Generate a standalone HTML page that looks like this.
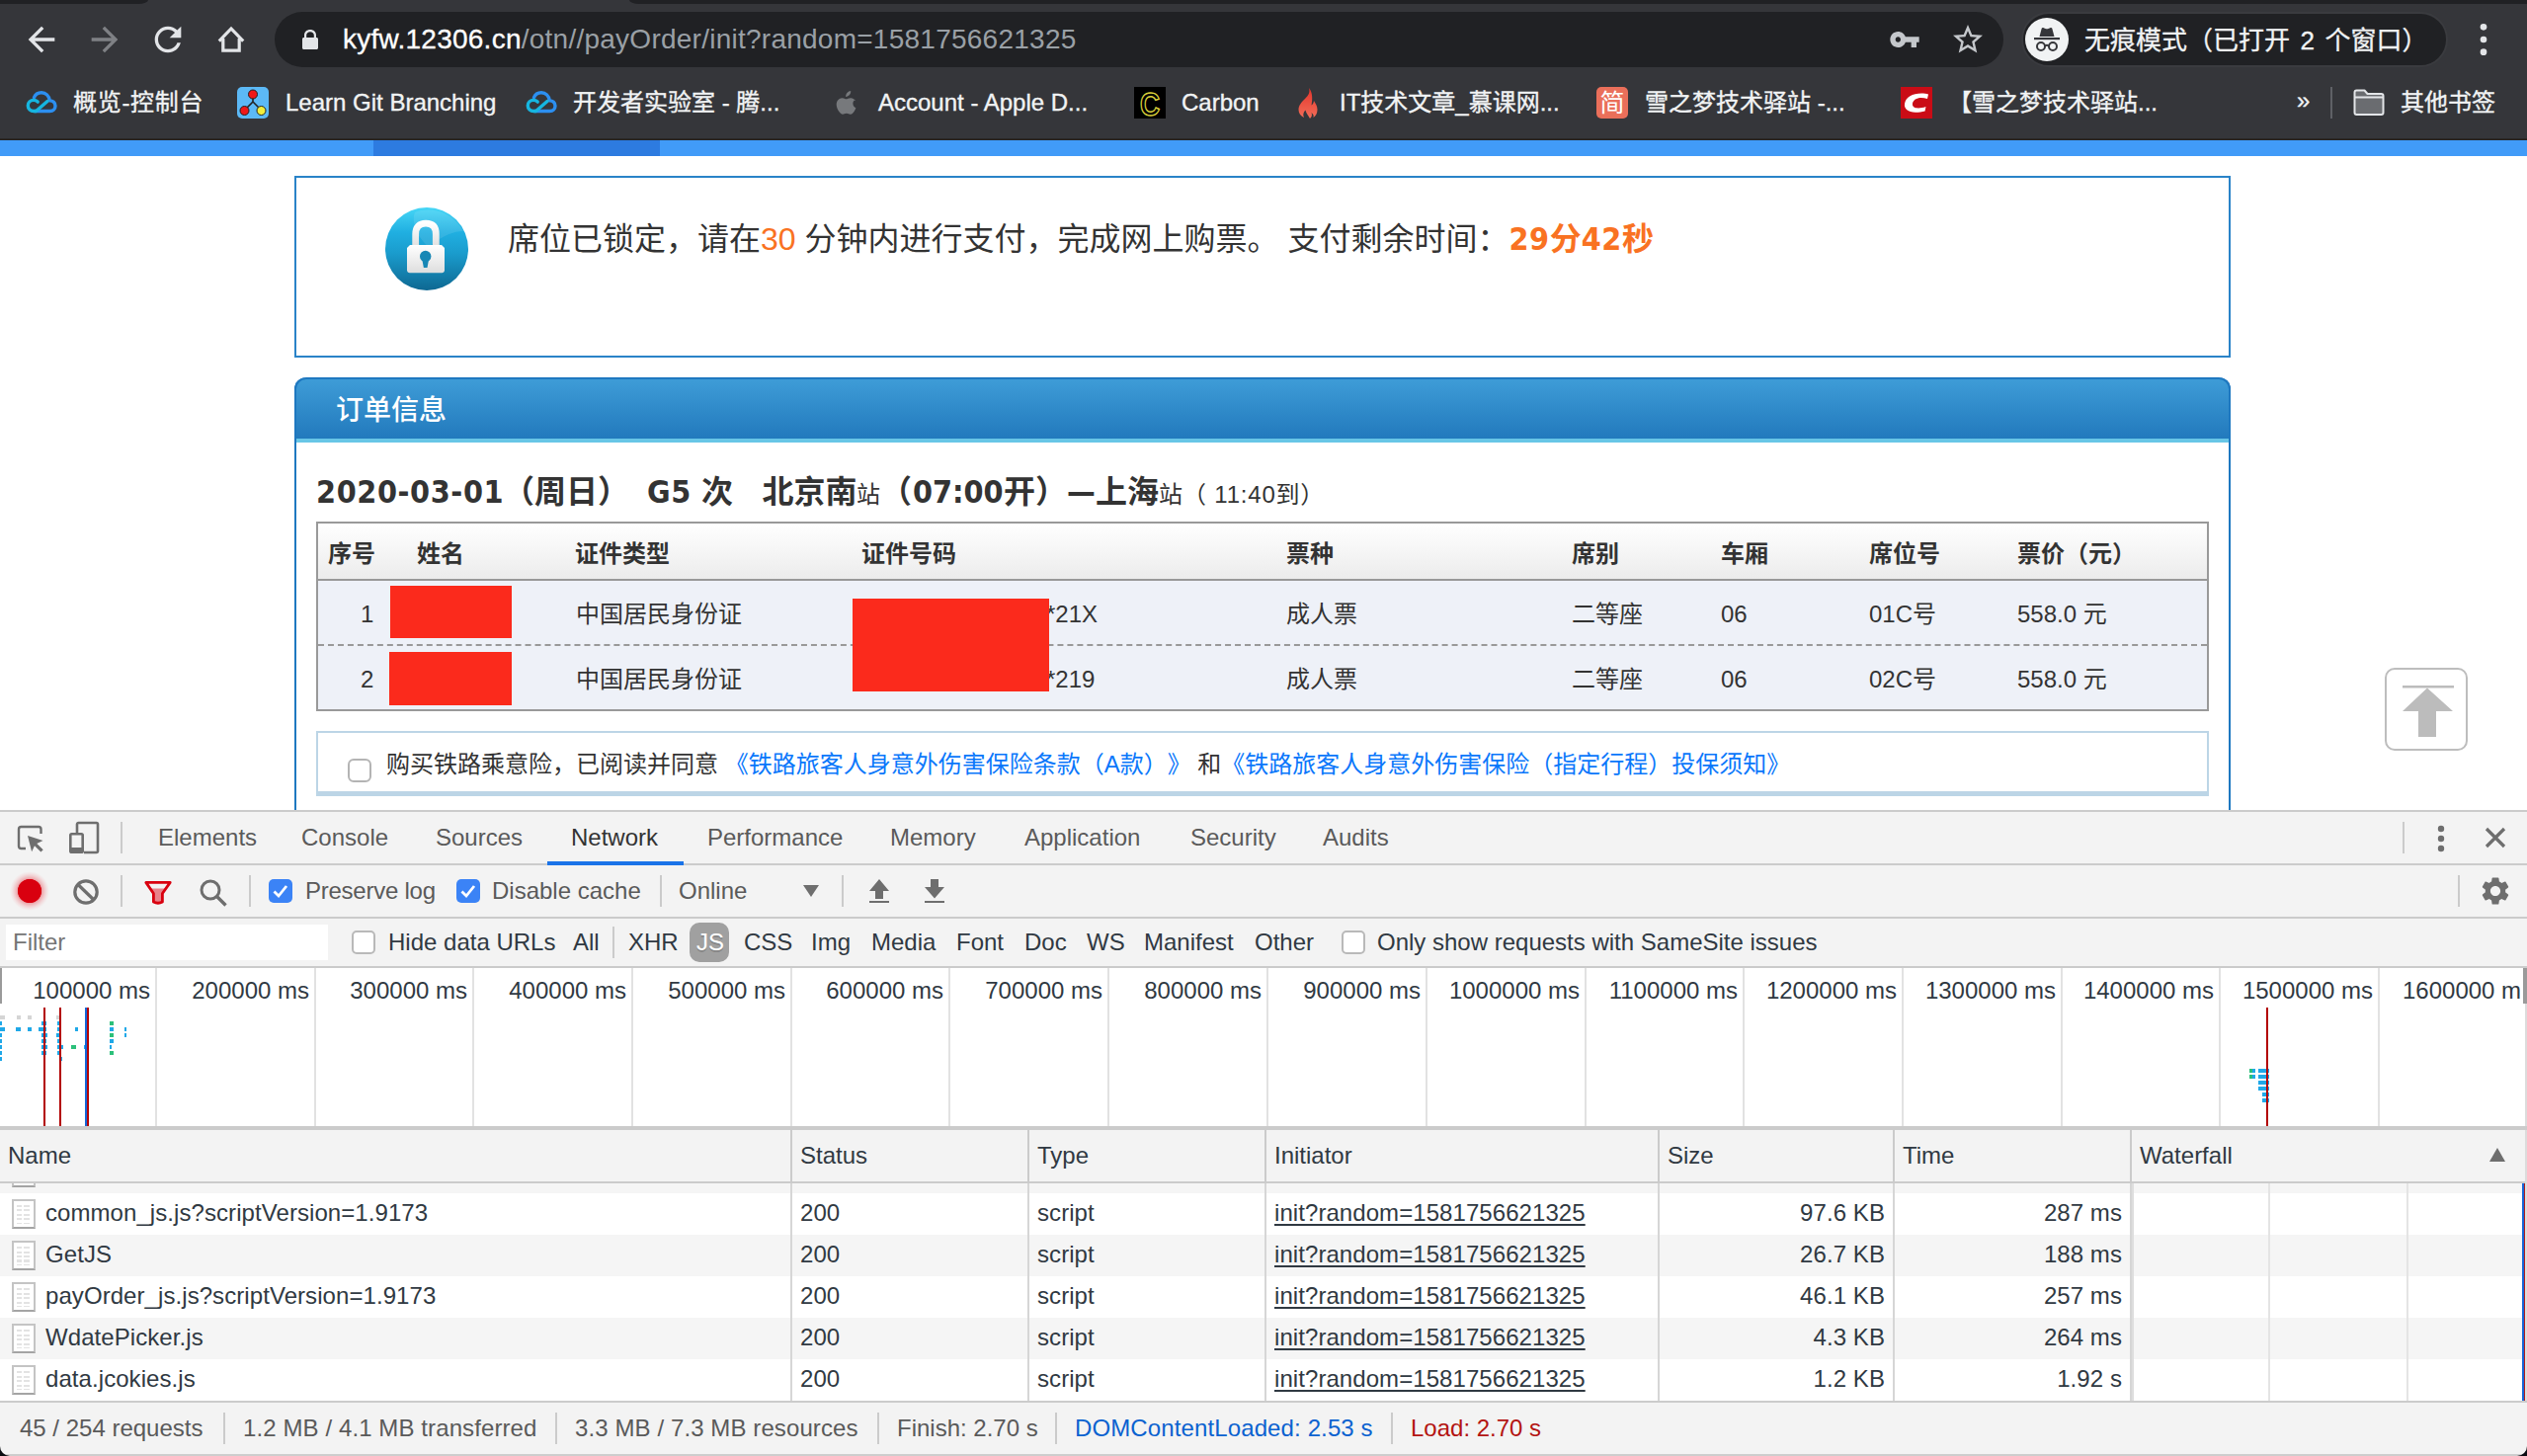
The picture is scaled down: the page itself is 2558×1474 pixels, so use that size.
<!DOCTYPE html>
<html lang="zh-CN">
<head>
<meta charset="utf-8">
<title>12306 payOrder</title>
<style>
*{box-sizing:border-box;margin:0;padding:0}
html,body{width:2558px;height:1474px;overflow:hidden;background:#fff}
body{position:relative;text-spacing-trim:space-all;font-family:"Liberation Sans","Noto Sans CJK SC",sans-serif;color:#333}
.a{position:absolute;white-space:nowrap}
svg{position:absolute;overflow:visible}
/* ---------- browser chrome ---------- */
#chrome{left:0;top:0;width:2558px;height:141px;background:#35363a}
#chrome .strip1{left:0;top:0;width:150px;height:4px;background:#202124;border-bottom-right-radius:10px 4px}
#chrome .strip2{left:637px;top:0;width:1921px;height:4px;background:#202124;border-bottom-left-radius:10px 4px}
#urlpill{left:278px;top:12px;width:1750px;height:56px;border-radius:28px;background:#202124}
#incog{left:2046px;top:12px;width:432px;height:56px;border-radius:28px;background:#202124;border:2px solid #3a3b3f}
.url{left:347px;top:22px;font-size:28px;line-height:36px;color:#9aa0a6;letter-spacing:.25px}
.url b{font-weight:normal;color:#fff;-webkit-text-stroke:.3px #fff}
.bm{top:87px;font-size:24px;line-height:34px;color:#f1f3f4;-webkit-text-stroke:.35px #f1f3f4}
.incogt{left:2110px;top:23px;font-size:26px;line-height:36px;color:#f1f3f4;word-spacing:3.3px;-webkit-text-stroke:.3px #f1f3f4}
#chromeline{left:0;top:140px;width:2558px;height:2px;background:linear-gradient(#2b2b2d,#221f1c)}
#bluebar{left:0;top:142px;width:2558px;height:16px;background:#419bf8}
#bluebar i{position:absolute;left:378px;top:0;width:290px;height:16px;background:#2d7be0}
/* ---------- page ---------- */
#page{left:0;top:158px;width:2558px;height:662px;background:#fff;overflow:hidden}
.pg{font-family:"Liberation Sans","Noto Sans CJK SC",sans-serif;color:#333}
#box1{left:298px;top:20px;width:1960px;height:184px;border:2px solid #2a83c8}
#obox{left:298px;top:224px;width:1960px;height:500px;border:2px solid #1e78c0;border-top:none;border-radius:12px 12px 0 0}
#ohead{left:298px;top:224px;width:1960px;height:66px;border-radius:12px 12px 0 0;background:linear-gradient(#3e9cd7,#2077bb);border:2px solid #1e78c0;border-bottom:none}
#oline{left:300px;top:286px;width:1956px;height:4px;background:#68c6e6}
.bold{font-family:"DejaVu Sans","Noto Sans CJK SC",sans-serif;font-stretch:condensed;font-weight:bold}
.ls{letter-spacing:.6px}
.tl1>span{display:inline-block;white-space:nowrap}
.tl1>span.bold{font-size:32px}
#tbl{left:320px;top:370px;width:1916px;height:192px;border:2px solid #999;background:#eef1f8}
#thead{left:322px;top:372px;width:1912px;height:58px;background:linear-gradient(#ffffff,#ececec);border-bottom:2px solid #999}
.th{top:383px;font-size:24px;line-height:40px;font-weight:bold;color:#333}
.td{font-size:24px;line-height:40px;color:#333}
.r1{top:444px}.r2{top:510px}
#dash{left:322px;top:494px;width:1912px;height:0;border-top:2px dashed #999}
.red{background:#fb2a1c}
#ins{left:320px;top:582px;width:1916px;height:66px;border:2px solid #bcd5e6;border-bottom-width:5px;background:#fff}
#ins .cb{left:30px;top:26px;width:24px;height:24px;border:2px solid #b4b4b4;border-radius:6px;background:#fff}
.lk{color:#0a77fb}
#totop{left:2414px;top:518px;width:84px;height:84px;border:2px solid #bdbdbd;border-radius:10px;background:#fff}
/* ---------- devtools ---------- */
#dt{left:0;top:820px;width:2558px;height:654px;background:#f3f3f3;font-size:24px;color:#303942}
.hl{left:0;width:2558px;height:2px;background:#cbcbcb}
.vs{width:2px;background:#cbcbcb}
.tab{top:11px;line-height:34px;color:#5a5a5a}
.t2{top:65px;line-height:34px;color:#5a5a5a}
.ft{top:117px;line-height:34px;color:#303942}
.cbx{width:24px;height:24px;border-radius:5px}
.cbon{background:#3b83f6}
.cboff{background:#fff;border:2px solid #b9b9b9}
#ov{left:0;top:160px;width:2558px;height:160px;background:#fff}
.tk{top:0;width:2px;height:160px;background:#e2e2e2}
.tl{top:6px;line-height:34px;color:#303942;text-align:right;width:156px}
#hdr{left:0;top:324px;width:2558px;height:52px}
.hd{top:9px;line-height:34px;color:#303942}
.row{left:0;width:2556px;height:42px}
.row.g{background:#f5f5f5}.row.w{background:#fff}
.row .c{letter-spacing:.07px;position:absolute;top:3px;line-height:34px;white-space:nowrap;color:#303942}
.row .u{text-decoration:underline;text-decoration-thickness:2px;text-underline-offset:3px}
.row .rt{text-align:right}
.fi{left:12px;top:6px;width:24px;height:30px;border:2px solid #c4c4c4;border-bottom-color:#a4a4a4;background:#fff}
.fi i{position:absolute;left:3px;top:4px;width:15px;height:19px;background:linear-gradient(90deg,transparent 0 5px,#fff 5px 7px,transparent 7px 13px,#fff 13px 15px),repeating-linear-gradient(#e3e3e3 0 2px,#fff 2px 4.500px)}
#sb{left:0;top:598px;width:2558px;height:56px;background:#f3f3f3;border-top:2px solid #cbcbcb}
#sb .s{top:9px;line-height:34px;color:#5a5a5a}
#sb .v{top:10px;height:32px}
</style>
</head>
<body>
<!-- CHROME -->
<div id="chrome" class="a">
<div class="a strip1"></div><div class="a strip2"></div>
<div id="urlpill" class="a"></div>
<div id="incog" class="a"></div>
<!-- nav icons -->
<svg style="left:22px;top:20px" width="40" height="40" viewBox="0 0 24 24"><path fill="#e3e5e8" d="M20 11H7.83l5.59-5.59L12 4l-8 8 8 8 1.41-1.41L7.83 13H20v-2z"/></svg>
<svg style="left:86px;top:20px" width="40" height="40" viewBox="0 0 24 24"><path fill="#7f8185" d="M12 4l-1.41 1.41L16.17 11H4v2h12.17l-5.58 5.59L12 20l8-8z"/></svg>
<svg style="left:150px;top:20px" width="40" height="40" viewBox="0 0 24 24"><path fill="#e3e5e8" d="M17.65 6.35C16.2 4.9 14.21 4 12 4c-4.42 0-7.99 3.58-7.99 8s3.57 8 7.99 8c3.73 0 6.84-2.55 7.73-6h-2.08c-.82 2.33-3.04 4-5.65 4-3.31 0-6-2.69-6-6s2.69-6 6-6c1.66 0 3.14.69 4.22 1.78L13 11h7V4l-2.35 2.35z"/></svg>
<svg style="left:214px;top:20px" width="40" height="40" viewBox="214 20 40 40"><path d="M221.800 41.600L234 29l12.200 12.600" fill="none" stroke="#e3e5e8" stroke-width="3.200" stroke-linejoin="miter"/><path d="M225.800 39v12.100h16.400V39" fill="none" stroke="#e3e5e8" stroke-width="3.200"/></svg>
<!-- lock -->
<svg style="left:304px;top:28px" width="20" height="24" viewBox="0 0 20 24"><path fill="#e3e5e8" d="M4 10V7.5C4 4.2 6.7 2 10 2s6 2.200 6 5.500V10h.5c.8 0 1.500.7 1.500 1.500v9c0 .8-.7 1.500-1.500 1.500h-13C2.700 22 2 21.300 2 20.500v-9C2 10.700 2.700 10 3.500 10H4zm2.200 0h7.600V7.500c0-2-1.700-3.300-3.800-3.300S6.200 5.500 6.200 7.500V10z"/></svg>
<div class="a url"><b>kyfw.12306.cn</b>/otn//payOrder/init?random=1581756621325</div>
<!-- key + star -->
<svg style="left:1912px;top:24px" width="32" height="32" viewBox="0 0 24 24"><path fill="#c4c7cb" d="M12.65 10C11.83 7.67 9.61 6 7 6c-3.310 0-6 2.690-6 6s2.690 6 6 6c2.610 0 4.830-1.670 5.650-4H17v4h4v-4h2v-4H12.650zM7 14c-1.100 0-2-.9-2-2s.9-2 2-2 2 .9 2 2-.9 2-2 2z"/></svg>
<svg style="left:1974px;top:22px" width="36" height="36" viewBox="0 0 24 24"><path fill="#c4c7cb" d="M22 9.240l-7.190-.62L12 2 9.190 8.630 2 9.240l5.460 4.730L5.820 21 12 17.270 18.180 21l-1.630-7.030L22 9.240zM12 15.400l-3.760 2.270 1-4.280-3.320-2.880 4.380-.38L12 6.100l1.710 4.040 4.380.38-3.320 2.880 1 4.280L12 15.400z"/></svg>
<!-- incognito avatar -->
<svg style="left:2050px;top:18px" width="44" height="44" viewBox="0 0 44 44"><circle cx="22" cy="22" r="22" fill="#f1f3f4"/><path fill="#35363a" d="M14.500 19l2.200-8.200c.2-.7.900-1 1.500-.8l2.300.9c1 .4 2 .4 3 0l2.300-.9c.6-.2 1.300.100 1.500.8L29.500 19z"/><rect x="9" y="20" width="26" height="2.200" fill="#35363a"/><circle cx="16" cy="29" r="4" fill="none" stroke="#35363a" stroke-width="2"/><circle cx="28" cy="29" r="4" fill="none" stroke="#35363a" stroke-width="2"/><path d="M20 28.500c1.200-.9 2.800-.9 4 0" fill="none" stroke="#35363a" stroke-width="1.800"/></svg>
<div class="a incogt">无痕模式（已打开 2 个窗口）</div>
<svg style="left:2494px;top:20px" width="40" height="40" viewBox="0 0 24 24"><g fill="#e3e5e8"><circle cx="12" cy="4.400" r="2"/><circle cx="12" cy="12" r="2"/><circle cx="12" cy="19.600" r="2"/></g></svg>
<!-- bookmarks -->
<svg style="left:26px;top:90px" width="32" height="26" viewBox="0 0 32 26"><path fill="none" stroke="#2c8ff0" stroke-width="3.400" stroke-linecap="round" stroke-linejoin="round" d="M9 22.500h15.500c3.200 0 5.500-2.300 5.500-5.300 0-3.100-2.500-5.400-5.600-5.300C23.600 7 20.300 3.800 16 3.800c-3.500 0-6.400 2.100-7.600 5.100"/><path fill="none" stroke="#16b6e0" stroke-width="3.400" stroke-linecap="round" stroke-linejoin="round" d="M22 12.500L10.500 22.500H8.200c-3.300 0-5.900-2.400-5.900-5.600 0-3.100 2.500-5.500 5.700-5.500 1.700 0 3 .6 4.200 1.700"/></svg>
<div class="a bm" style="left:74px;letter-spacing:.7px">概览-控制台</div>
<svg style="left:240px;top:88px" width="32" height="32" viewBox="0 0 32 32"><rect width="32" height="32" rx="5" fill="#5cb9f6"/><path d="M16 8v7M16 15l-8 8M16 15l8 8" stroke="#222" stroke-width="1.600" fill="none"/><circle cx="16" cy="7.500" r="4.500" fill="#f01818" stroke="#222" stroke-width="1"/><circle cx="7.500" cy="24" r="4.500" fill="#f01818" stroke="#222" stroke-width="1"/><circle cx="24.500" cy="24" r="4.500" fill="#f2ee3a" stroke="#222" stroke-width="1"/></svg>
<div class="a bm" style="left:289px">Learn Git Branching</div>
<svg style="left:532px;top:90px" width="32" height="26" viewBox="0 0 32 26"><path fill="none" stroke="#2c8ff0" stroke-width="3.400" stroke-linecap="round" stroke-linejoin="round" d="M9 22.500h15.500c3.200 0 5.500-2.300 5.500-5.300 0-3.100-2.500-5.400-5.600-5.300C23.600 7 20.300 3.800 16 3.800c-3.500 0-6.400 2.100-7.600 5.100"/><path fill="none" stroke="#16b6e0" stroke-width="3.400" stroke-linecap="round" stroke-linejoin="round" d="M22 12.500L10.500 22.500H8.200c-3.300 0-5.900-2.400-5.900-5.600 0-3.100 2.500-5.500 5.700-5.500 1.700 0 3 .6 4.200 1.700"/></svg>
<div class="a bm" style="left:580px">开发者实验室 - 腾...</div>
<svg style="left:845px;top:91px" width="24" height="28" viewBox="0 0 24 28"><path fill="#77797c" d="M16.200 1c.2 1.600-.4 3-1.300 4.100-.9 1.100-2.400 1.900-3.700 1.800-.2-1.500.5-3 1.300-3.900C13.400 1.900 15 1.100 16.200 1zM20.700 9.800c-1.400.9-2.300 2.200-2.300 4 0 2.100 1.200 3.700 3 4.400-.4 1.200-1 2.400-1.700 3.500-1 1.500-2.100 3-3.800 3-1.600 0-2.100-1-4-1s-2.500 1-4 1c-1.700 0-2.900-1.600-3.900-3.100C1.900 18.300.8 14 2.700 11c1-1.700 2.900-2.800 4.900-2.800 1.700 0 3 1.100 4 1.100s2.700-1.200 4.700-1.100c1.700.1 3.300.8 4.400 2.600z"/></svg>
<div class="a bm" style="left:889px">Account - Apple D...</div>
<svg style="left:1148px;top:88px" width="32" height="32" viewBox="0 0 32 32"><rect width="32" height="32" fill="#000"/><text x="16" y="29.300" font-size="34" font-weight="bold" font-family="'Liberation Sans',sans-serif" text-anchor="middle" fill="none" stroke="#d9cf3a" stroke-width="1.500" transform="translate(16 0) scale(.82 1) translate(-16 0)">C</text></svg>
<div class="a bm" style="left:1196px">Carbon</div>
<svg style="left:1312px;top:88px" width="24" height="32" viewBox="0 0 24 32"><defs><linearGradient id="fl" x1="0" y1="0" x2="0" y2="1"><stop offset="0" stop-color="#e5352c"/><stop offset="1" stop-color="#f26d58"/></linearGradient></defs><path fill="url(#fl)" d="M13 1c1.500 5-1 8-4 11C5.500 15.500 2.500 18.500 2.500 23c0 3.500 2 6.500 5.500 8-1.500-3-.5-5.500 1.500-7.500.5 3 2.500 4.500 4.500 8.500 1.800-1.500 2.500-3.500 1.500-6 2 1.500 2.500 3 2 5 2.500-1.500 4-4.500 4-8 0-4-2-6.500-3.500-9-.3 2-1 3.500-2.500 4.500C16.500 13 17 6 13 1z"/></svg>
<div class="a bm" style="left:1356px">IT技术文章_慕课网...</div>
<svg style="left:1616px;top:88px" width="32" height="32" viewBox="0 0 32 32"><rect width="32" height="32" rx="5" fill="#ea6f5a"/><text x="16" y="25" font-size="25" text-anchor="middle" fill="#fff" font-family="'Liberation Sans','Noto Sans CJK SC',sans-serif">简</text></svg>
<div class="a bm" style="left:1665px">雪之梦技术驿站 -...</div>
<svg style="left:1924px;top:88px" width="32" height="32" viewBox="0 0 32 32"><rect width="32" height="32" fill="#ca0c16"/><path fill="#fff" d="M28 7.500c-1.700-.6-4.400-1-7-1C12 6.500 5 10.500 4 17c-.8 5.300 3.600 8.700 11 8.700 3.400 0 6.300-.4 9.600-1.300l.9-4.400c-2.800 1-5.200 1.400-7.600 1.400-4.200 0-6.400-1.600-5.900-4.700.6-3.600 4-5.800 8.800-5.800 2.100 0 4.100.3 6.200 1z"/></svg>
<div class="a bm" style="left:1972px">【雪之梦技术驿站...</div>
<div class="a bm" style="left:2325px;top:85px">»</div>
<div class="a" style="left:2359px;top:88px;width:2px;height:32px;background:#5f6166"></div>
<svg style="left:2382px;top:90px" width="32" height="28" viewBox="0 0 32 28"><path fill="#6a6c70" stroke="#e3e5e8" stroke-width="2" stroke-linejoin="round" d="M1.500 3.500c0-1.100.9-2 2-2h8l3 3.500h14c1.100 0 2 .9 2 2V24c0 1.100-.9 2-2 2h-25c-1.100 0-2-.9-2-2z"/><path d="M1.500 8.500h29" stroke="#e3e5e8" stroke-width="2"/></svg>
<div class="a bm" style="left:2430px">其他书签</div>
</div>
<div id="chromeline" class="a"></div>
<div id="bluebar" class="a"><i></i></div>
<!-- PAGE -->
<div id="page" class="a pg">
<div id="box1" class="a"></div>
<!-- lock icon -->
<svg style="left:390px;top:52px" width="84" height="84" viewBox="0 0 84 84">
<defs><linearGradient id="lg1" x1="0" y1="0" x2="0" y2="1"><stop offset="0" stop-color="#46d6f6"/><stop offset=".3" stop-color="#20afe1"/><stop offset=".55" stop-color="#1a9ccd"/><stop offset="1" stop-color="#0e6892"/></linearGradient>
<linearGradient id="lg2" x1="0" y1="0" x2="0" y2="1"><stop offset="0" stop-color="#ffffff"/><stop offset="1" stop-color="#dedede"/></linearGradient></defs>
<circle cx="42" cy="42" r="42" fill="url(#lg1)"/>
<path d="M30 5C46 -1 68 4 79 24C70 24 58 28 44 40C32 30 26 14 30 5z" fill="#ffffff" opacity=".1"/>
<path d="M30.700 41V27C30.700 19.500 34.500 16.200 41 16.200S51.300 19.500 51.300 27V41" fill="none" stroke="url(#lg2)" stroke-width="6.800"/>
<path d="M25 38h32l3 3v22.500c0 1.500-1.200 2.700-2.700 2.700H24.700c-1.500 0-2.700-1.200-2.700-2.700V41z" fill="url(#lg2)"/>
<circle cx="40.700" cy="49.500" r="5.700" fill="#1787b5"/><path d="M37.200 52h7l-1.700 9h-3.600z" fill="#1787b5"/>
</svg>
<div class="a" style="left:514px;top:60px;font-size:32px;line-height:48px">席位已锁定，请在<span style="color:#f97222">30</span> 分钟内进行支付，完成网上购票。 支付剩余时间：<span class="bold" style="color:#f97222;font-size:32px"><span class="ls">29</span>分<span class="ls">42</span>秒</span></div>
<!-- order box -->
<div id="obox" class="a"></div>
<div id="ohead" class="a"></div>
<div id="oline" class="a"></div>
<div class="a" style="left:340px;top:235px;font-size:28px;line-height:46px;color:#fff;font-weight:500">订单信息</div>
<div class="a tl1" style="left:320px;top:316px;font-size:24px;line-height:48px"><span class="bold" style="width:189px"><span class="ls">2020-03-01</span></span><span class="bold" style="width:146px">（周日）</span><span class="bold" style="width:55px"><span class="ls">G5</span></span><span class="bold" style="width:61.5px">次</span><span class="bold" style="width:95.5px">北京南</span><span style="width:24px">站</span><span class="bold" style="width:33px">（</span><span class="bold" style="width:92px">07:00</span><span class="bold" style="width:64px">开）</span><span class="bold" style="width:29px">—</span><span class="bold" style="width:64px">上海</span><span style="width:24px">站</span><span style="letter-spacing:.8px">（ 11:40到）</span></div>
<div id="tbl" class="a"></div>
<div id="thead" class="a"></div>
<div class="a th" style="left:332px">序号</div>
<div class="a th" style="left:422px">姓名</div>
<div class="a th" style="left:582px">证件类型</div>
<div class="a th" style="left:872px">证件号码</div>
<div class="a th" style="left:1302px">票种</div>
<div class="a th" style="left:1591px">席别</div>
<div class="a th" style="left:1742px">车厢</div>
<div class="a th" style="left:1892px">席位号</div>
<div class="a th" style="left:2042px">票价（元）</div>
<div id="dash" class="a"></div>
<div class="a td r1" style="left:365px">1</div>
<div class="a td r1" style="left:583px">中国居民身份证</div>
<div class="a td r1" style="left:1059px">*21X</div>
<div class="a td r1" style="left:1302px">成人票</div>
<div class="a td r1" style="left:1591px">二等座</div>
<div class="a td r1" style="left:1742px">06</div>
<div class="a td r1" style="left:1892px">01C号</div>
<div class="a td r1" style="left:2042px">558.0 元</div>
<div class="a td r2" style="left:365px">2</div>
<div class="a td r2" style="left:583px">中国居民身份证</div>
<div class="a td r2" style="left:1059px">*219</div>
<div class="a td r2" style="left:1302px">成人票</div>
<div class="a td r2" style="left:1591px">二等座</div>
<div class="a td r2" style="left:1742px">06</div>
<div class="a td r2" style="left:1892px">02C号</div>
<div class="a td r2" style="left:2042px">558.0 元</div>
<div class="a red" style="left:395px;top:435px;width:123px;height:53px"></div>
<div class="a red" style="left:394px;top:502px;width:124px;height:54px"></div>
<div class="a red" style="left:863px;top:448px;width:199px;height:94px"></div>
<!-- insurance -->
<div id="ins" class="a"><div class="a cb"></div>
<div class="a" style="left:69px;top:12px;font-size:24px;line-height:40px">购买铁路乘意险，已阅读并同意 <span class="lk">《铁路旅客人身意外伤害保险条款（A款）》</span> 和<span class="lk">《铁路旅客人身意外伤害保险（指定行程）投保须知》</span></div>
</div>
<!-- back to top -->
<div id="totop" class="a"></div>
<svg style="left:2414px;top:518px" width="84" height="84" viewBox="0 0 84 84"><rect x="18" y="18" width="52" height="2.500" fill="#bcbcbc"/><path d="M43 20.500L69 44H52v26H34V44H18z" fill="#bcbcbc"/></svg>
</div>
<!-- DEVTOOLS -->
<div id="dt" class="a">
<div class="a hl" style="top:0"></div>
<!-- tab bar -->
<svg style="left:16px;top:14px" width="30" height="30" viewBox="0 0 30 30"><path d="M25.500 10V5.500C25.500 4.100 24.400 3 23 3H5.500C4.100 3 3 4.100 3 5.500v17C3 23.900 4.100 25 5.500 25H10" fill="none" stroke="#6e6e6e" stroke-width="2.400"/><path d="M12 12l15.500 5-6.200 2.900 6.400 6.400-2.300 2.300-6.400-6.400-2.900 6.100z" fill="#6e6e6e"/></svg>
<svg style="left:68px;top:10px" width="34" height="36" viewBox="0 0 34 36"><path d="M10 13V4.500C10 3.700 10.700 3 11.500 3h18c.8 0 1.500.7 1.500 1.500v27c0 .8-.7 1.500-1.500 1.500H17" fill="none" stroke="#6e6e6e" stroke-width="2.600"/><rect x="3.300" y="14.300" width="12.400" height="18.400" rx="1.300" fill="none" stroke="#6e6e6e" stroke-width="2.600"/><rect x="3" y="28" width="13" height="5" fill="#6e6e6e"/></svg>
<div class="a vs" style="left:122px;top:12px;height:32px"></div>
<div class="a tab" style="left:160px">Elements</div>
<div class="a tab" style="left:305px">Console</div>
<div class="a tab" style="left:441px">Sources</div>
<div class="a tab" style="left:578px;color:#333">Network</div>
<div class="a tab" style="left:716px">Performance</div>
<div class="a tab" style="left:901px">Memory</div>
<div class="a tab" style="left:1037px">Application</div>
<div class="a tab" style="left:1205px">Security</div>
<div class="a tab" style="left:1339px">Audits</div>
<div class="a vs" style="left:2432px;top:12px;height:32px"></div>
<svg style="left:2459px;top:14px" width="24" height="30" viewBox="0 0 24 30"><g fill="#6e6e6e"><circle cx="12" cy="5" r="3.200"/><circle cx="12" cy="15" r="3.200"/><circle cx="12" cy="25" r="3.200"/></g></svg>
<svg style="left:2514px;top:16px" width="24" height="24" viewBox="0 0 24 24"><path d="M3 3l18 18M21 3L3 21" stroke="#6e6e6e" stroke-width="3.200" fill="none"/></svg>
<div class="a hl" style="top:54px"></div>
<div class="a" style="left:554px;top:52px;width:138px;height:4px;background:#1a73e8"></div>
<!-- toolbar -->
<svg style="left:10px;top:62px" width="40" height="40" viewBox="0 0 40 40"><defs><radialGradient id="rg1"><stop offset=".58" stop-color="#d9000f"/><stop offset=".62" stop-color="#e8636c" stop-opacity=".55"/><stop offset="1" stop-color="#f3b0b4" stop-opacity="0"/></radialGradient></defs><circle cx="20" cy="20" r="20" fill="url(#rg1)"/><circle cx="20" cy="20" r="12" fill="#d9000f"/></svg>
<svg style="left:72px;top:68px" width="30" height="30" viewBox="0 0 30 30"><circle cx="15" cy="15" r="11.200" fill="none" stroke="#6e6e6e" stroke-width="3.200"/><path d="M7 7.500l16 15.500" stroke="#6e6e6e" stroke-width="3.200"/></svg>
<div class="a vs" style="left:122px;top:66px;height:32px"></div>
<svg style="left:140px;top:60px" width="40" height="40" viewBox="140 60 40 40"><path d="M152 79.500H168L164.400 84.500V93Q160 95.500 155.400 93V84.500Z" fill="#e8828b"/><path d="M147.800 73.400H172.200L164.400 84.500V93Q160 95.500 155.400 93V84.500Z" fill="none" stroke="#d9000f" stroke-width="2.800" stroke-linejoin="round"/></svg>
<svg style="left:200px;top:68px" width="32" height="32" viewBox="0 0 32 32"><circle cx="13" cy="13" r="9" fill="none" stroke="#6e6e6e" stroke-width="3"/><path d="M19.500 19.500l9 9" stroke="#6e6e6e" stroke-width="3.400"/></svg>
<div class="a vs" style="left:252px;top:66px;height:32px"></div>
<div class="a cbx cbon" style="left:272px;top:70px"></div><svg style="left:272px;top:70px" width="24" height="24" viewBox="0 0 24 24"><path d="M5.500 12.500l4.500 4.500 8-10" fill="none" stroke="#fff" stroke-width="2.800"/></svg>
<div class="a t2" style="left:309px;letter-spacing:-.25px">Preserve log</div>
<div class="a cbx cbon" style="left:462px;top:70px"></div><svg style="left:462px;top:70px" width="24" height="24" viewBox="0 0 24 24"><path d="M5.500 12.500l4.500 4.500 8-10" fill="none" stroke="#fff" stroke-width="2.800"/></svg>
<div class="a t2" style="left:498px">Disable cache</div>
<div class="a vs" style="left:668px;top:66px;height:32px"></div>
<div class="a t2" style="left:687px">Online</div>
<svg style="left:813px;top:76px" width="16" height="12" viewBox="0 0 16 12"><path d="M0 0h16L8 12z" fill="#6e6e6e"/></svg>
<div class="a vs" style="left:852px;top:66px;height:32px"></div>
<svg style="left:878px;top:70px" width="24" height="24" viewBox="0 0 24 24"><path d="M12 0l10 12h-6v8H8v-8H2z" fill="#6e6e6e"/><rect x="2" y="22" width="20" height="2" fill="#6e6e6e"/></svg>
<svg style="left:934px;top:70px" width="24" height="24" viewBox="0 0 24 24"><path d="M12 19.600L2 8h6V0h8v8h6z" fill="#6e6e6e"/><rect x="2" y="22" width="20" height="2" fill="#6e6e6e"/></svg>
<div class="a vs" style="left:2488px;top:66px;height:32px"></div>
<svg style="left:2509px;top:65px" width="34" height="34" viewBox="0 0 24 24"><path fill="#6e6e6e" d="M19.140 12.940c.04-.3.060-.61.060-.94 0-.32-.02-.64-.07-.94l2.030-1.580c.18-.14.230-.41.120-.61l-1.920-3.320c-.12-.22-.37-.29-.59-.22l-2.390.96c-.5-.38-1.030-.7-1.620-.94l-.36-2.540c-.04-.24-.24-.41-.48-.41h-3.840c-.24 0-.43.170-.47.410l-.36 2.540c-.59.240-1.130.570-1.620.94l-2.390-.96c-.22-.08-.47 0-.59.220L2.740 8.870c-.12.210-.08.470.12.610l2.030 1.580c-.05.3-.09.630-.09.940s.02.640.07.940l-2.030 1.580c-.18.140-.23.410-.12.610l1.920 3.320c.12.220.37.290.59.220l2.390-.96c.5.380 1.030.7 1.620.94l.36 2.540c.05.240.24.410.48.410h3.840c.24 0 .44-.17.470-.41l.36-2.540c.59-.24 1.130-.56 1.620-.94l2.390.96c.22.080.47 0 .59-.22l1.920-3.320c.12-.22.070-.47-.12-.61l-2.010-1.580zM12 15.600c-1.980 0-3.600-1.620-3.600-3.600s1.620-3.600 3.600-3.600 3.600 1.620 3.600 3.600-1.620 3.600-3.600 3.600z"/></svg>
<div class="a hl" style="top:108px"></div>
<!-- filter bar -->
<div class="a" style="left:6px;top:116px;width:326px;height:36px;background:#fff"></div>
<div class="a ft" style="left:13px;color:#757575">Filter</div>
<div class="a cbx cboff" style="left:356px;top:122px"></div>
<div class="a ft" style="left:393px">Hide data URLs</div>
<div class="a ft" style="left:580px">All</div>
<div class="a vs" style="left:620px;top:118px;height:32px"></div>
<div class="a ft" style="left:636px">XHR</div>
<div class="a" style="left:698px;top:114px;width:40px;height:40px;border-radius:10px;background:#a0a0a0"></div>
<div class="a ft" style="left:705px;color:#fff;text-shadow:0 2px 0 rgba(0,0,0,.18)">JS</div>
<div class="a ft" style="left:753px">CSS</div>
<div class="a ft" style="left:821px">Img</div>
<div class="a ft" style="left:882px">Media</div>
<div class="a ft" style="left:968px">Font</div>
<div class="a ft" style="left:1037px">Doc</div>
<div class="a ft" style="left:1100px">WS</div>
<div class="a ft" style="left:1158px">Manifest</div>
<div class="a ft" style="left:1270px">Other</div>
<div class="a cbx cboff" style="left:1358px;top:122px"></div>
<div class="a ft" style="left:1394px">Only show requests with SameSite issues</div>
<div class="a hl" style="top:158px"></div>
<!-- overview -->
<div id="ov" class="a"><div class="a tk" style="left:157px"></div><div class="a tl" style="left:-4px">100000 ms</div><div class="a tk" style="left:318px"></div><div class="a tl" style="left:157px">200000 ms</div><div class="a tk" style="left:478px"></div><div class="a tl" style="left:317px">300000 ms</div><div class="a tk" style="left:639px"></div><div class="a tl" style="left:478px">400000 ms</div><div class="a tk" style="left:800px"></div><div class="a tl" style="left:639px">500000 ms</div><div class="a tk" style="left:960px"></div><div class="a tl" style="left:799px">600000 ms</div><div class="a tk" style="left:1121px"></div><div class="a tl" style="left:960px">700000 ms</div><div class="a tk" style="left:1282px"></div><div class="a tl" style="left:1121px">800000 ms</div><div class="a tk" style="left:1443px"></div><div class="a tl" style="left:1282px">900000 ms</div><div class="a tk" style="left:1604px"></div><div class="a tl" style="left:1443px">1000000 ms</div><div class="a tk" style="left:1764px"></div><div class="a tl" style="left:1603px">1100000 ms</div><div class="a tk" style="left:1925px"></div><div class="a tl" style="left:1764px">1200000 ms</div><div class="a tk" style="left:2086px"></div><div class="a tl" style="left:1925px">1300000 ms</div><div class="a tk" style="left:2246px"></div><div class="a tl" style="left:2085px">1400000 ms</div><div class="a tk" style="left:2407px"></div><div class="a tl" style="left:2246px">1500000 ms</div><div class="a tl" style="left:2432px;width:119px;text-align:left;overflow:hidden">1600000 ms</div>
<div class="a" style="left:0;top:0;width:2px;height:36px;background:#9a9a9a"></div>
<div class="a" style="left:2554px;top:0;width:4px;height:36px;background:#9a9a9a"></div>
<div class="a" style="left:2556px;top:36px;width:2px;height:124px;background:#dcdcdc"></div>
<svg style="left:0;top:0" width="2558" height="160" viewBox="0 0 2558 160">
<g fill="#d5d5d5"><rect x="0" y="48" width="5" height="4"/><rect x="17" y="48" width="4" height="4"/><rect x="28" y="48" width="4" height="4"/><rect x="57" y="48" width="3" height="4"/></g>
<g fill="#1fa8e8">
<rect x="0" y="54" width="2" height="4"/><rect x="42" y="54" width="5" height="4"/><rect x="58" y="54" width="3" height="4"/>
<rect x="0" y="60" width="5" height="4"/><rect x="16" y="60" width="5" height="4"/><rect x="28" y="60" width="4" height="4"/><rect x="39" y="60" width="8" height="4"/><rect x="58" y="60" width="3" height="4"/><rect x="76" y="60" width="3" height="4"/><rect x="111" y="60" width="4" height="4"/><rect x="126" y="60" width="2" height="4"/>
<rect x="0" y="66" width="2" height="4"/><rect x="42" y="66" width="6" height="4"/><rect x="57" y="66" width="3" height="4"/><rect x="126" y="66" width="2" height="4"/>
<rect x="0" y="72" width="2" height="4"/><rect x="42" y="72" width="5" height="4"/><rect x="58" y="72" width="3" height="4"/><rect x="111" y="72" width="4" height="4"/>
<rect x="0" y="78" width="2" height="4"/><rect x="42" y="78" width="6" height="4"/><rect x="58" y="78" width="6" height="4"/><rect x="85" y="78" width="2" height="4"/><rect x="111" y="78" width="2" height="4"/>
<rect x="0" y="84" width="2" height="4"/><rect x="42" y="84" width="5" height="4"/><rect x="58" y="84" width="3" height="4"/>
<rect x="0" y="90" width="2" height="4"/><rect x="61" y="90" width="2" height="4"/>
<rect x="2286" y="102" width="11" height="4"/><rect x="2286" y="108" width="11" height="4"/><rect x="2286" y="114" width="11" height="4"/><rect x="2286" y="120" width="11" height="4"/><rect x="2290" y="126" width="7" height="4"/><rect x="2290" y="132" width="7" height="4"/>
<rect x="2280" y="102" width="3" height="4"/><rect x="2280" y="108" width="3" height="4"/>
</g>
<g fill="#2cc07a"><rect x="111" y="54" width="4" height="4"/><rect x="111" y="66" width="4" height="4"/><rect x="72" y="78" width="5" height="4"/><rect x="111" y="84" width="4" height="4"/><rect x="2277" y="102" width="3" height="4"/><rect x="2277" y="108" width="3" height="4"/></g>
<g fill="#b30000"><rect x="44" y="40" width="2" height="120"/><rect x="60" y="40" width="2" height="120"/><rect x="88" y="40" width="2" height="120"/><rect x="2294" y="40" width="2" height="120"/></g>
<rect x="86" y="40" width="2" height="120" fill="#1565d8"/>
</svg>
</div>
<div class="a" style="left:0;top:320px;width:2558px;height:4px;background:#cbcbcb"></div>
<!-- header -->
<div id="hdr" class="a">
<div class="a hd" style="left:8px">Name</div>
<div class="a hd" style="left:810px">Status</div>
<div class="a hd" style="left:1050px">Type</div>
<div class="a hd" style="left:1290px">Initiator</div>
<div class="a hd" style="left:1688px">Size</div>
<div class="a hd" style="left:1926px">Time</div>
<div class="a hd" style="left:2166px">Waterfall</div>
<svg style="left:2520px;top:18px" width="16" height="14" viewBox="0 0 16 14"><path d="M8 0l8 14H0z" fill="#6e6e6e"/></svg>
</div>
<div class="a hl" style="top:376px"></div>
<div class="a row g" style="top:378px;height:10px;overflow:hidden"><div class="a fi" style="top:-26px"></div></div>
<div class="a row w" style="top:388px"><div class="a fi"><i></i></div><div class="c" style="left:46px">common_js.js?scriptVersion=1.9173</div><div class="c" style="left:810px">200</div><div class="c" style="left:1050px">script</div><div class="c u" style="left:1290px">init?random=1581756621325</div><div class="c rt" style="left:1700px;width:208px">97.6 KB</div><div class="c rt" style="left:1940px;width:208px">287 ms</div></div>
<div class="a row g" style="top:430px"><div class="a fi"><i></i></div><div class="c" style="left:46px">GetJS</div><div class="c" style="left:810px">200</div><div class="c" style="left:1050px">script</div><div class="c u" style="left:1290px">init?random=1581756621325</div><div class="c rt" style="left:1700px;width:208px">26.7 KB</div><div class="c rt" style="left:1940px;width:208px">188 ms</div></div>
<div class="a row w" style="top:472px"><div class="a fi"><i></i></div><div class="c" style="left:46px">payOrder_js.js?scriptVersion=1.9173</div><div class="c" style="left:810px">200</div><div class="c" style="left:1050px">script</div><div class="c u" style="left:1290px">init?random=1581756621325</div><div class="c rt" style="left:1700px;width:208px">46.1 KB</div><div class="c rt" style="left:1940px;width:208px">257 ms</div></div>
<div class="a row g" style="top:514px"><div class="a fi"><i></i></div><div class="c" style="left:46px">WdatePicker.js</div><div class="c" style="left:810px">200</div><div class="c" style="left:1050px">script</div><div class="c u" style="left:1290px">init?random=1581756621325</div><div class="c rt" style="left:1700px;width:208px">4.3 KB</div><div class="c rt" style="left:1940px;width:208px">264 ms</div></div>
<div class="a row w" style="top:556px"><div class="a fi"><i></i></div><div class="c" style="left:46px">data.jcokies.js</div><div class="c" style="left:810px">200</div><div class="c" style="left:1050px">script</div><div class="c u" style="left:1290px">init?random=1581756621325</div><div class="c rt" style="left:1700px;width:208px">1.2 KB</div><div class="c rt" style="left:1940px;width:208px">1.92 s</div></div>

<!-- column separators -->
<div class="a vs" style="left:800px;top:324px;height:52px;background:#cbcbcb"></div><div class="a vs" style="left:800px;top:378px;height:220px;background:#d6d6d6"></div>
<div class="a vs" style="left:1040px;top:324px;height:52px;background:#cbcbcb"></div><div class="a vs" style="left:1040px;top:378px;height:220px;background:#d6d6d6"></div>
<div class="a vs" style="left:1280px;top:324px;height:52px;background:#cbcbcb"></div><div class="a vs" style="left:1280px;top:378px;height:220px;background:#d6d6d6"></div>
<div class="a vs" style="left:1678px;top:324px;height:52px;background:#cbcbcb"></div><div class="a vs" style="left:1678px;top:378px;height:220px;background:#d6d6d6"></div>
<div class="a vs" style="left:1916px;top:324px;height:52px;background:#cbcbcb"></div><div class="a vs" style="left:1916px;top:378px;height:220px;background:#d6d6d6"></div>
<div class="a vs" style="left:2156px;top:324px;height:52px;background:#cbcbcb"></div><div class="a vs" style="left:2156px;top:378px;height:220px;background:#d6d6d6"></div>
<div class="a vs" style="left:2158px;top:378px;height:220px;background:#dedede"></div>
<div class="a vs" style="left:2296px;top:378px;height:220px;background:#e4e4e4"></div>
<div class="a vs" style="left:2436px;top:378px;height:220px;background:#e4e4e4"></div>
<div class="a" style="left:2553px;top:378px;width:2px;height:220px;background:#1565d8"></div>
<div class="a" style="left:2555px;top:378px;width:1px;height:220px;background:#b01c1c"></div>
<div class="a" style="left:2556px;top:324px;width:2px;height:274px;background:#dcdcdc"></div>
<!-- status bar -->
<div id="sb" class="a">
<div class="a s" style="left:20px">45 / 254 requests</div>
<div class="a vs v" style="left:226px"></div>
<div class="a s" style="left:246px;letter-spacing:.1px">1.2 MB / 4.1 MB transferred</div>
<div class="a vs v" style="left:562px"></div>
<div class="a s" style="left:582px;letter-spacing:.1px">3.3 MB / 7.3 MB resources</div>
<div class="a vs v" style="left:888px"></div>
<div class="a s" style="left:908px">Finish: 2.70 s</div>
<div class="a vs v" style="left:1068px"></div>
<div class="a s" style="left:1088px;color:#0b62d0;letter-spacing:.12px">DOMContentLoaded: 2.53 s</div>
<div class="a vs v" style="left:1408px"></div>
<div class="a s" style="left:1428px;color:#b31412">Load: 2.70 s</div>
</div>
</div>
<div class="a" style="left:0;top:1472px;width:2558px;height:2px;background:#cdcdcd"></div>
<svg style="left:0;top:1462px" width="2558" height="12" viewBox="0 1462 2558 12"><path d="M0 1464V1474H10A10 10 0 0 1 0 1464Z" fill="#0b0d12"/><path d="M2558 1464V1474H2548A10 10 0 0 0 2558 1464Z" fill="#0b0d12"/></svg>
</body>
</html>
